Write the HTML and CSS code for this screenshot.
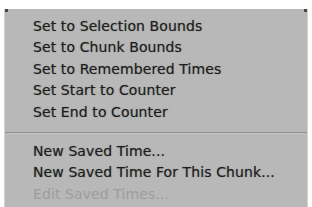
FILE: index.html
```html
<!DOCTYPE html>
<html lang="en">
<head>
  <meta charset="UTF-8">
  <title>Saved Times Menu</title>
  <link rel="stylesheet" href="styles.css">
</head>
<body>
<div class="menu">
  <div class="group">
    <div class="item">Set to Selection Bounds</div>
    <div class="item">Set to Chunk Bounds</div>
    <div class="item">Set to Remembered Times</div>
    <div class="item">Set Start to Counter</div>
    <div class="item">Set End to Counter</div>
  </div>
  <div class="separator"></div>
  <div class="group">
    <div class="item">New Saved Time...</div>
    <div class="item">New Saved Time For This Chunk...</div>
    <div class="item disabled">Edit Saved Times...</div>
  </div>
</div>
</body>
</html>
```

FILE: styles.css
```css
html, body {
  margin: 0;
  padding: 0;
  background: #fff;
  height: 100%;
  overflow: hidden;
}

.menu {
  position: relative;
  margin: 9px 0 0 4px;
  width: 304px;
  height: 198px;
  background: #b7b8b7;
  border-left: 1px solid #d2d2d2;
  border-right: 1px solid #d2d2d2;
  box-sizing: border-box;
  padding-top: 6.6px;
  font-family: "DejaVu Sans", "Lucida Grande", sans-serif;
  font-size: 14px;
  letter-spacing: 0.1px;
  color: #1e1e1e;
}

.menu::before,
.menu::after {
  content: "";
  position: absolute;
  top: 0;
  width: 3px;
  height: 3px;
  background: #4a4a4a;
}

.menu::before { left: 0; }
.menu::after { right: 0; }

.item {
  height: 21.5px;
  line-height: 21.5px;
  padding-left: 28px;
  white-space: nowrap;
  text-shadow: 0 0 1px rgba(30, 30, 30, 0.5);
}

.item.disabled {
  color: #9d9e9d;
  text-shadow: none;
}

.separator {
  height: 1px;
  margin: 9px 0 6.6px;
  background: #8e8e8e;
  border-bottom: 1px solid #c4c4c4;
}
```
